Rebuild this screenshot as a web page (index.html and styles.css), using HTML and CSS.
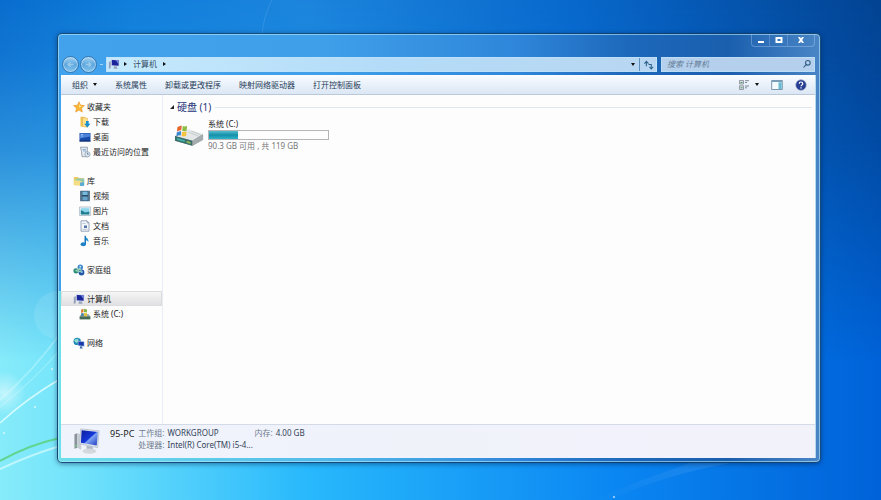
FILE: index.html
```html
<!DOCTYPE html>
<html lang="zh-CN">
<head>
<meta charset="utf-8">
<title>计算机</title>
<meta name="viewport" content="width=device-width, initial-scale=1">
<link rel="stylesheet" href="styles.css">
</head>
<body>
<svg class="wallpaper" viewBox="0 0 881 500" preserveAspectRatio="none" aria-hidden="true">
  <defs>
    <linearGradient id="sky-low"><stop offset="0" stop-color="#86ebfa"/><stop offset=".08" stop-color="#74e4fb"/><stop offset=".35" stop-color="#28b8fc"/><stop offset=".7" stop-color="#0a86f2"/><stop offset="1" stop-color="#0062d8"/></linearGradient>
    <linearGradient id="sky-high"><stop offset="0" stop-color="#086cce"/><stop offset=".15" stop-color="#107edb"/><stop offset=".35" stop-color="#1c84dc"/><stop offset=".65" stop-color="#0868cc"/><stop offset="1" stop-color="#024392"/></linearGradient>
    <linearGradient id="fade" x2="0" y2="1"><stop offset="0" stop-color="#fff"/><stop offset=".12" stop-color="#ececec"/><stop offset=".3" stop-color="#b8b8b8"/><stop offset=".5" stop-color="#606060"/><stop offset=".72" stop-color="#000"/></linearGradient>
    <mask id="high-mask"><rect width="881" height="500" fill="url(#fade)"/></mask>
    <linearGradient id="ray" x1="0" x2="1"><stop offset="0" stop-color="#fff" stop-opacity="0"/><stop offset="1" stop-color="#fff" stop-opacity=".1"/></linearGradient>
    <radialGradient id="glow"><stop offset="0" stop-color="#fff" stop-opacity=".5"/><stop offset="1" stop-color="#fff" stop-opacity="0"/></radialGradient>
  </defs>
  <rect width="881" height="500" fill="url(#sky-low)"/>
  <rect width="881" height="500" fill="url(#sky-high)" mask="url(#high-mask)"/>
  <ellipse cx="4" cy="393" rx="22" ry="22" fill="url(#glow)"/>
  <circle cx="58" cy="315" r="24" fill="#fff" opacity=".1"/>
  <g fill="none" stroke="#e8ffff">
    <path d="M0 400Q32 372 60 334" stroke-width="2" opacity=".3"/>
    <path d="M0 407Q32 382 60 350" opacity=".4"/>
    <path d="M0 423Q26 399 60 379" stroke-width="1.5" opacity=".8"/>
    <path d="M0 469Q30 455 60 446" stroke-width="2" opacity=".6"/>
    <path d="M0 461Q28 445 60 438" stroke="#5fd58f" stroke-width="2"/>
  </g>
  <path d="M590 500Q640 480 690 463L730 463Q660 476 610 500Z" fill="url(#ray)"/>
  <path d="M262 34Q264 15 272 0" fill="none" stroke="#8cc8ff" opacity=".2"/>
  <g fill="#fff" opacity=".7"><circle cx="4" cy="433" r="1"/><circle cx="35" cy="407" r="1"/><circle cx="52" cy="369" r="1"/><circle cx="614" cy="497" r="1"/></g>
</svg>

<svg class="defs" aria-hidden="true">
  <defs>
    <linearGradient id="screen" x1="0" y1="0" x2="1" y2="1"><stop offset="0" stop-color="#0a1c9c"/><stop offset=".5" stop-color="#1538d8"/><stop offset=".55" stop-color="#7fa4f4"/><stop offset="1" stop-color="#1b38c0"/></linearGradient>
    <symbol id="i-pc" viewBox="0 0 12 12"><path d="M.8 4l2-1v7l-2 1z" fill="#98a3bb"/><path d="M3 1.200l8.300 .5v6.800L3 8z" fill="#cfd8ee"/><path d="M3.800 1.900l6.800.4v5.500L3.800 7.300z" fill="#1a249a"/><path d="M7.500 2.100l3.100.2v4z" fill="#6f83db"/><path d="M6 8.300l3 .2v1.300l1 .9H5.500z" fill="#98a5be"/></symbol>
    <symbol id="i-star" viewBox="0 0 12 12"><path d="M6 .8l1.500 3.400 3.900.4-2.900 2.600.8 3.900L6 9.100l-3.300 2 .8-3.900L.6 4.600l3.900-.4z" fill="#fbb634" stroke="#e58f1c" stroke-width=".6"/><path d="M6 2.400L7 5l2.500.3L6 6.600z" fill="#ffe59a"/></symbol>
    <symbol id="i-down" viewBox="0 0 12 12"><path d="M1.500 .8h4.500v9.700H1.500z" fill="#f0c050"/><path d="M3.500 1.300l5 1V11.200l-5-.7z" fill="#ffe08c" stroke="#dba83c" stroke-width=".5"/><path d="M7 5h2.700v2.700h1.800L8.300 11.500 5.200 7.700H7z" fill="#168ed0"/></symbol>
    <symbol id="i-desk" viewBox="0 0 12 12"><path d="M.5 2h11v8.500H.5z" fill="#174aa8"/><path d="M1 2.500h10v3L1 7.500z" fill="#4b82d9"/><path d="M.5 9.500h11v1H.5z" fill="#142a63"/><path d="M2 3.500h2M2 5h2" stroke="#b7d5ff" stroke-width=".7"/></symbol>
    <symbol id="i-recent" viewBox="0 0 12 12"><path d="M1.500 1.200h7l-.5 6 1 3.500H3l-.5-5z" fill="#e6ebf1" stroke="#8592a0" stroke-width=".8"/><path d="M3.500 3.500h3.500M4 5h3" stroke="#76a3ce" stroke-width=".8"/><circle cx="8.500" cy="8.300" r="2.600" fill="#dfe9f2" stroke="#8297aa" stroke-width=".7"/><path d="M8.500 6.800v1.500h1.300" stroke="#3f5d77" stroke-width=".7" fill="none"/></symbol>
    <symbol id="i-lib" viewBox="0 0 12 12"><path d="M.8 2h4l1 1h4.700v7H.8z" fill="#ebca62"/><path d="M2 4h6v5.500H2z" fill="#a8d99c"/><path d="M4 3.500h7.300V10H4z" fill="#90c9b0"/><path d="M.8 5.500H7L9 7v4l-8.200-.8z" fill="#f4dd84"/><path d="M7 7.500h4V11H7z" fill="#5aabd5"/></symbol>
    <symbol id="i-video" viewBox="0 0 12 12"><path d="M1.200 .8h9.600v10.400H1.200z" fill="#284a66"/><path d="M3.300 1.500h5.400V5H3.300z" fill="#78b9dc"/><path d="M3.300 6.500h5.400v4H3.300z" fill="#67a3ca"/><path d="M2.200 1.500v9M9.800 1.500v9" stroke="#cbdce8" stroke-dasharray="1 1" stroke-width=".8"/></symbol>
    <symbol id="i-pic" viewBox="0 0 12 12"><path d="M.6 2h10.800v8.500H.6z" fill="#f4f8fa" stroke="#99afbd" stroke-width=".7"/><path d="M1.800 3.200h8.500v6.200H1.800z" fill="#8dd5ec"/><path d="M1.800 5.200L4 6l2 1.500 4.300-1v2.900H1.800z" fill="#207d92"/></symbol>
    <symbol id="i-doc" viewBox="0 0 12 12"><path d="M2 .8h6l2 2v8.400H2z" fill="#f4f7fb" stroke="#8191a6" stroke-width=".8"/><path d="M3.500 3.500h3M3.500 9.300h5" stroke="#a9bacb" stroke-width=".8"/><path d="M5 5.500h3V8H5z" fill="#5577a8"/><path d="M8 .8v2h2" fill="none" stroke="#8191a6" stroke-width=".7"/></symbol>
    <symbol id="i-music" viewBox="0 0 12 12"><path d="M6 .8c.5 2 4.200 2.700 3.400 6.500C9 5.800 7.800 5.300 6.900 5.200v4H6z" fill="#2592cf"/><path d="M6.200 .8v8.700" stroke="#166fb5" stroke-width="1.300"/><ellipse cx="4.300" cy="9.300" rx="2.700" ry="2" fill="#1d82c6"/></symbol>
    <symbol id="i-home" viewBox="0 0 12 12"><circle cx="7.300" cy="3.300" r="2.700" fill="#3e86cc"/><circle cx="3" cy="6.800" r="2.600" fill="#2c8b78"/><circle cx="8.500" cy="8.500" r="2.900" fill="#2455a4"/><path d="M3 6.800L7 4.300 8.700 8z" fill="none" stroke="#9bd5b8" stroke-width="1.100"/><circle cx="7.300" cy="2.700" r=".9" fill="#c5e7fb"/><circle cx="8.900" cy="8" r="1" fill="#82b6e8"/></symbol>
    <symbol id="i-drive" viewBox="0 0 12 12"><path d="M.7 8l2-2h6.600l2 2v3.300H.7z" fill="#a2aaae"/><path d="M.7 8.500h10.600v2.800H.7z" fill="#456b52"/><path d="M2 1.800l2.500-1v3.300L2 5z" fill="#d9853b"/><path d="M5 .8l3 .6v3.200L5 4z" fill="#84b748"/><path d="M2 5.500l2.500-.8V8H2z" fill="#4c88a8"/><path d="M5 4.700l3 .6V8.500L5 8z" fill="#e5c53f"/></symbol>
    <symbol id="i-net" viewBox="0 0 12 12"><circle cx="4.200" cy="4.400" r="3.700" fill="#1a86b8"/><path d="M1 3.500C3 .8 4 3 5.500 1.300L5 5 3 6z" fill="#8ddcc8"/><path d="M4.800 3.800l6.700.5v5.400l-6.700-.8z" fill="#b5cbe9"/><path d="M5.400 4.500l5.400.5v4l-5.400-.7z" fill="#1a3bad"/><path d="M7.200 9.300l2 .2v1.200l.8.700H6.700z" fill="#3d6fa9"/></symbol>
  </defs>
</svg>

<main class="window">
  <header class="titlebar">
    <div class="captions">
      <button type="button" aria-label="最小化"><svg viewBox="0 0 10 10"><path d="M2 6h6v2H2z"/></svg></button>
      <button type="button" aria-label="最大化"><svg viewBox="0 0 10 10"><path d="M1.500 2h7v6h-7zM3.500 4v2h3V4z" fill-rule="evenodd"/></svg></button>
      <button type="button" class="close" aria-label="关闭"><svg viewBox="0 0 10 10"><path d="M2 2h2l1 1.500L6 2h2L6.200 5 8 8H6L5 6.500 4 8H2l1.800-3z"/></svg></button>
    </div>
  </header>

  <div class="navrow">
    <div class="history">
      <button type="button" aria-label="后退"><svg viewBox="0 0 12 12"><path d="M10 6H3M6 3L3 6l3 3"/></svg></button>
      <button type="button" aria-label="前进"><svg viewBox="0 0 12 12"><path d="M2 6h7M6 3l3 3-3 3"/></svg></button>
    </div>
    <span class="recent-mark"></span>
    <div class="address">
      <svg class="icon"><use href="#i-pc"/></svg>
      <i class="tri right"></i>
      <a href="#computer">计算机</a>
      <i class="tri right"></i>
      <button type="button" class="drop" aria-label="以前的位置"><i class="tri down"></i></button>
      <button type="button" class="refresh" aria-label="刷新"><svg viewBox="0 0 12 12"><path d="M3.700 8V2.500M1.500 5l2.200-2.500L6 5M6 6h3v3.500M7 8.500l2 2.200 2-2.200"/></svg></button>
    </div>
    <div class="search">
      <input type="search" placeholder="搜索 计算机" aria-label="搜索 计算机">
      <svg viewBox="0 0 12 12"><circle cx="7" cy="4.500" r="2.800"/><path d="M5 6.700L1.800 10.200"/></svg>
    </div>
  </div>

  <div class="client">
    <nav class="toolbar" aria-label="工具栏">
      <button type="button">组织 <i class="tri down"></i></button>
      <button type="button">系统属性</button>
      <button type="button">卸载或更改程序</button>
      <button type="button">映射网络驱动器</button>
      <button type="button">打开控制面板</button>
      <div class="tools">
        <button type="button" aria-label="更改视图"><svg class="icon" viewBox="0 0 12 12"><path d="M1.500 1.500h4v3.500h-4zM1.500 6.800h4v3.700h-4z" fill="#d9dfe5" stroke="#8b949e" stroke-width=".9"/><path d="M2.500 3.500h2M2.500 8.800h2" stroke="#4f9662"/><path d="M7 1.700h4M7 3.500h2M7 7h4M7 8.800h2" stroke="#73808e" stroke-width=".9"/></svg><i class="tri down"></i></button>
        <button type="button" aria-label="预览窗格"><svg class="icon" viewBox="0 0 12 12"><path d="M.7 1.500h10.600v9H.7z" fill="#f5fafd" stroke="#6f8da6" stroke-width=".9"/><path d="M.7 1.500h10.600v1.500H.7z" fill="#799eb9"/><path d="M7.500 3.300h3.200v6.700H7.500z" fill="#68bad0"/></svg></button>
        <button type="button" aria-label="帮助"><svg class="icon" viewBox="0 0 12 12"><circle cx="6" cy="6" r="5.200" fill="#263d91" stroke="#8794bf" stroke-width=".7"/><path d="M4.200 4.800C4.200 2.300 7.800 2.500 7.800 4.600 7.800 6 6 5.800 6 7.300M6 8.300v1.200" fill="none" stroke="#fff" stroke-width="1.200"/></svg></button>
      </div>
    </nav>

    <div class="panes">
      <nav class="tree" aria-label="导航窗格">
        <ul>
          <li><a href="#favorites"><svg class="icon"><use href="#i-star"/></svg>收藏夹</a></li>
          <li class="sub"><a href="#downloads"><svg class="icon"><use href="#i-down"/></svg>下载</a></li>
          <li class="sub"><a href="#desktop"><svg class="icon"><use href="#i-desk"/></svg>桌面</a></li>
          <li class="sub"><a href="#recent"><svg class="icon"><use href="#i-recent"/></svg>最近访问的位置</a></li>
        </ul>
        <ul>
          <li><a href="#libraries"><svg class="icon"><use href="#i-lib"/></svg>库</a></li>
          <li class="sub"><a href="#videos"><svg class="icon"><use href="#i-video"/></svg>视频</a></li>
          <li class="sub"><a href="#pictures"><svg class="icon"><use href="#i-pic"/></svg>图片</a></li>
          <li class="sub"><a href="#documents"><svg class="icon"><use href="#i-doc"/></svg>文档</a></li>
          <li class="sub"><a href="#music"><svg class="icon"><use href="#i-music"/></svg>音乐</a></li>
        </ul>
        <ul><li><a href="#homegroup"><svg class="icon"><use href="#i-home"/></svg>家庭组</a></li></ul>
        <ul>
          <li class="selected"><a href="#computer" aria-current="page"><svg class="icon"><use href="#i-pc"/></svg>计算机</a></li>
          <li class="sub"><a href="#drive-c"><svg class="icon"><use href="#i-drive"/></svg>系统 (C:)</a></li>
        </ul>
        <ul><li><a href="#network"><svg class="icon"><use href="#i-net"/></svg>网络</a></li></ul>
      </nav>

      <section class="content" id="computer">
        <h2><svg viewBox="0 0 6 6"><path d="M5 1v4H1z"/></svg>硬盘 (1)</h2>
        <a class="drive" href="#drive-c">
          <svg class="drive-icon" viewBox="0 0 32 24">
            <path d="M1 13L15 7l15 5v5l-11 6L1 18z" fill="#878f93"/>
            <path d="M1 13L15 6l15 5-11 7z" fill="#e4e7e8"/>
            <path d="M1 13l18 5v5L1 18z" fill="#3b6f69"/>
            <path d="M19 18l11-7v6l-11 6z" fill="#a5adaf"/>
            <path d="M3 15l8 2.300v2L3 17z" fill="#3fb4b0"/><path d="M13 18l4 1.200v2L13 20z" fill="#91b65d"/>
            <path d="M15 9l10 4M18 8l9 3.500" stroke="#bcc3c5" stroke-width=".8"/>
            <path d="M3.500 4q2-2 4.500-1.500L7.500 7Q5.500 7 3 8.500z" fill="#e8652f"/>
            <path d="M9 2.700q2 1 4.500 0L13 7.500q-2.500 1-4.500 0z" fill="#8bbd45"/>
            <path d="M2.800 9.500Q5 8 7.500 8L7 12.500q-2-.5-4.500 1z" fill="#3c88cf"/>
            <path d="M8.500 8.500q2 1 4.500 0L12.500 13q-2.500 1-4.500 0z" fill="#f3c43c"/>
          </svg>
          <span class="drive-text">
            <span>系统 (C:)</span>
            <span class="meter"><span class="used" style="width:24%"></span></span>
            <span class="free">90.3 GB 可用 , 共 119 GB</span>
          </span>
        </a>
      </section>
    </div>

    <footer class="details">
      <svg class="computer-icon" viewBox="0 0 30 28">
        <path d="M1.500 7l3-1v15l-3 1z" fill="#8a929b"/><path d="M4.500 6l4 1v16l-4-2z" fill="#c6cdd3"/><circle cx="3" cy="19" r="1" fill="#74c980"/>
        <path d="M8 1.500l19 2-1.500 17.500L7 17z" fill="#dce1eb" stroke="#a9b2c3" stroke-width=".6"/>
        <path d="M9 2.800l16.800 1.900-1.300 14L8.200 15.700z" fill="url(#screen)"/>
        <path d="M14 19l6 1 1 3-7-1z" fill="#aeb8c2"/><ellipse cx="17" cy="24.500" rx="7" ry="2.800" fill="#d2d8de"/>
      </svg>
      <strong>95-PC</strong>
      <dl>
        <dt>工作组:</dt><dd>WORKGROUP</dd><dt>内存:</dt><dd>4.00 GB</dd>
        <dt>处理器:</dt><dd>Intel(R) Core(TM) i5-4...</dd>
      </dl>
    </footer>
  </div>
</main>
</body>
</html>
```
FILE: styles.css
```css
* { box-sizing: border-box; }

body {
  margin: 0;
  min-height: 100vh;
  padding: 33px 60px 37px 57px;
  display: flex;
  font: 8px/14px "Noto Sans", "Noto Sans CJK SC", sans-serif;
  color: #222;
  background: #0a78dc;
}

button, input { font: inherit; color: inherit; }
button { padding: 0; border: 0; background: none; display: flex; align-items: center; }
a { color: inherit; text-decoration: none; }
ul, dl, dd, h2 { margin: 0; padding: 0; font-weight: normal; list-style: none; }

.wallpaper { position: absolute; inset: 0; width: 100%; height: 100%; z-index: -1; }
.defs { position: absolute; width: 0; height: 0; }
.icon { width: 12px; height: 12px; flex: none; }

.tri { border: 2px solid transparent; flex: none; }
.tri.down { border-top: 3px solid #111; border-bottom: 0; }
.tri.right { border-left: 3px solid #111; border-right: 0; }

.window {
  flex: 1;
  min-width: 0;
  display: flex;
  flex-direction: column;
  padding: 0 4px 4px 3px;
  border: 1px solid rgba(10, 55, 95, .8);
  border-radius: 5px;
  box-shadow: inset 0 0 0 1px rgba(185, 235, 255, .6), 0 1px 5px rgba(0, 25, 70, .5);
  background:
    linear-gradient(90deg, rgba(120, 240, 235, .8), rgba(80, 190, 245, 0) 60%) bottom / 100% 40% no-repeat,
    linear-gradient(90deg, #42a2ec 0%, #3f9fe9 35%, #2f86da 60%, #1d68bb 75%, #1a5fae 88%, #4a86c6 100%);
}

.titlebar { height: 19px; display: flex; justify-content: flex-end; align-items: flex-start; padding-right: 1px; }
.captions {
  display: flex;
  border: 1px solid rgba(190, 220, 250, .35);
  border-top: 0;
  border-radius: 0 0 4px 4px;
}
.captions button { width: 18px; height: 12px; justify-content: center; border-right: 1px solid rgba(190, 220, 250, .25); }
.captions .close { width: 26px; border: 0; }
.captions svg { width: 10px; height: 10px; fill: #fff; }

.navrow { height: 22px; display: flex; align-items: center; padding-right: 1px; }
.history { display: flex; gap: 1px; margin-left: 1px; }
.history button {
  width: 17px;
  height: 17px;
  justify-content: center;
  border: 1px solid #3478b4;
  border-radius: 50%;
  background: linear-gradient(#a4d2f2, #5fa8de 50%, #83c4ef);
  box-shadow: inset 0 0 0 1px rgba(225, 243, 255, .5);
}
.history svg { width: 9px; height: 9px; fill: none; stroke: #98caeb; stroke-width: 2; }
.recent-mark { width: 3px; height: 1px; margin: 0 3px; background: #a4d6f5; }
.address, .search {
  height: 15px;
  display: flex;
  align-items: center;
  border: 1px solid rgba(190, 226, 250, .7);
  background: #b9dcf5;
}
.address { flex: 1; gap: 6px; padding-left: 1px; color: #364d63; background: linear-gradient(90deg, #c6eafd, #b4dcf8 50%, #b8d6f1); }
.address .icon { margin-right: -2px; }
.drop { margin-left: auto; }
.refresh { width: 17px; height: 13px; margin-left: -2px; justify-content: center; border-left: 1px solid #5d91c2; }
.refresh svg { width: 11px; height: 11px; fill: none; stroke: #31658e; stroke-width: 1.2; }
.search { flex: 0 1 154px; margin-left: 4px; padding: 0 2px 0 5px; background: #b5d0ec; }
.search input { flex: 1; min-width: 0; padding: 0; border: 0; outline: 0; background: none; font-style: italic; }
.search input::placeholder { color: #657d96; opacity: 1; }
.search svg { width: 10px; height: 10px; fill: none; stroke: #315d89; stroke-width: 1.3; }

.client { flex: 1; display: flex; flex-direction: column; border-right: 1px solid #b6d9ee; background: #fdfdfe; }
.toolbar {
  height: 20px;
  display: flex;
  align-items: center;
  gap: 18px;
  padding: 0 8px 0 11px;
  color: #263b57;
  background: linear-gradient(#fafdff, #e9f1fa 50%, #dce7f4);
  border-bottom: 1px solid #b9c9da;
}
.toolbar button { gap: 5px; white-space: nowrap; }
.tools { margin-left: auto; display: flex; gap: 12px; }

.panes { flex: 1; display: flex; }
.tree { flex: none; width: 102px; padding-top: 4px; display: flex; flex-direction: column; gap: 14px; border-right: 1px solid #e6edf5; }
.tree a { height: 15px; display: flex; align-items: center; gap: 2px; padding-left: 12px; white-space: nowrap; }
.tree .sub a { padding-left: 18px; }
.tree .selected { background: linear-gradient(#f7f7f8, #dfdfe1); box-shadow: inset 0 0 0 1px #dcdcde; border-radius: 1px; }

.content { flex: 1; min-width: 0; padding: 5px 3px 0 6px; }
.content h2 { display: flex; align-items: center; gap: 2px; font-size: 10px; color: #253579; }
.content h2 svg { width: 6px; height: 6px; fill: #222; }
.content h2::after { content: ""; flex: 1; height: 1px; margin-left: 2px; background: #e1e6ee; }
.drive { display: flex; align-items: center; gap: 3px; margin: 4px 0 0 5px; }
.drive-icon { width: 31px; height: 24px; flex: none; }
.drive-text { display: flex; flex-direction: column; line-height: 12px; }
.meter { width: 121px; height: 10px; border: 1px solid #b5b5b8; background: #fdfdfd; }
.used { display: block; height: 100%; background: linear-gradient(#54bfd0, #168fa9 50%, #2fb4c8); }
.free { color: #777; }

.details {
  height: 34px;
  display: flex;
  align-items: flex-start;
  gap: 4px;
  padding: 2px 12px;
  background: linear-gradient(90deg, #eff3fb, #f2f2fb);
  border-top: 1px solid #d4dbe7;
}
.computer-icon { width: 29px; height: 28px; flex: none; }
.details strong { margin-left: 4px; font-size: 9px; font-weight: normal; white-space: nowrap; }
.details dl { display: grid; grid-template-columns: auto 84px auto auto; gap: 0 3px; line-height: 12px; white-space: nowrap; color: #34445a; }
.details dt { color: #6d7a8b; }
```
